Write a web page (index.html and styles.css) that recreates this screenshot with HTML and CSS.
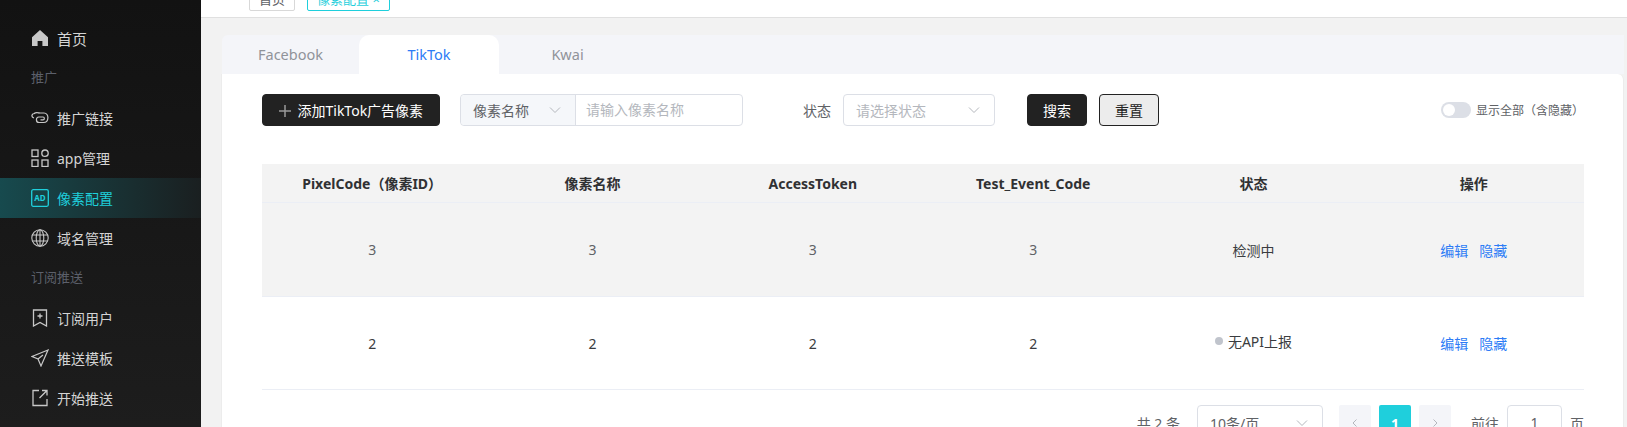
FILE: index.html
```html
<!DOCTYPE html>
<html lang="zh-CN">
<head>
  <meta charset="UTF-8" />
  <title>像素配置</title>
  <link rel="stylesheet" href="styles.css">
</head>
<body>

  <div class="sidebar">
    <div class="menu-item">
      <svg class="menu-icon" viewBox="0 0 18 18"><path d="M9 1 1 8.200V17h5.600v-5h4.800v5H17V8.200z" fill="#c8c8c8"/></svg>
      <span class="home-text">首页</span>
    </div>
    <div class="menu-group">推广</div>
    <div class="menu-item">
      <svg class="menu-icon" viewBox="0 0 18 18" fill="none" stroke="#c8c8c8" stroke-width="1.200"><path d="M4 4.500C.5 4.500-.2 8 3 9M7.500 4h5.500c5.300 0 5.300 9.500-.5 9.500H8c-3.300 0-3.500-5.200-.2-5.500h4.200c1.800 0 1.800 2.800 0 2.800H9.500"/><path d="M3 4.500C5 3 7 3.500 8.500 4"/></svg>
      <span>推广链接</span>
    </div>
    <div class="menu-item">
      <svg class="menu-icon" viewBox="0 0 18 18" fill="none" stroke="#c8c8c8" stroke-width="1.300"><rect x="1" y="1" width="6" height="6.500"/><circle cx="14" cy="4.200" r="3.200"/><rect x="1" y="11" width="6" height="6.500"/><rect x="11" y="11" width="6" height="6.500"/></svg>
      <span>app管理</span>
    </div>
    <div class="menu-item menu-active">
      <svg class="menu-icon" viewBox="0 0 18 18"><rect x=".7" y=".7" width="16.600" height="16.600" rx="1.500" fill="none" stroke="#1fcfdc" stroke-width="1.300"/><text x="9" y="12" class="ad-text">AD</text></svg>
      <span>像素配置</span>
    </div>
    <div class="menu-item">
      <svg class="menu-icon" viewBox="0 0 18 18" fill="none" stroke="#c8c8c8" stroke-width="1.100"><circle cx="9" cy="9" r="8.200"/><ellipse cx="9" cy="9" rx="3.800" ry="8.200"/><path d="M9 .8v16.400M1.500 6h15M1.500 12h15"/></svg>
      <span>域名管理</span>
    </div>
    <div class="menu-group">订阅推送</div>
    <div class="menu-item">
      <svg class="menu-icon" viewBox="0 0 18 18" fill="none" stroke="#c8c8c8" stroke-width="1.300"><path d="M2.500 1h13v16L9 13.500 2.500 17z"/><path d="M9 4.500v5M6.500 7h5"/></svg>
      <span>订阅用户</span>
    </div>
    <div class="menu-item">
      <svg class="menu-icon" viewBox="0 0 18 18" fill="none" stroke="#c8c8c8" stroke-width="1.200"><path d="M17 1 1 7.500l6 2.500 3 7zM7 10l5-4"/></svg>
      <span>推送模板</span>
    </div>
    <div class="menu-item">
      <svg class="menu-icon" viewBox="0 0 18 18" fill="none" stroke="#c8c8c8" stroke-width="1.300"><path d="M8 1.500H2v15h14V10M11 1.500h5v5M16 1.500 8.500 9"/></svg>
      <span>开始推送</span>
    </div>
  </div>

  <div class="main">
    <div class="topbar">
      <div class="tag">首页</div>
      <div class="tag tag-on">像素配置 ×</div>
    </div>

    <div class="content">
      <div class="tabs">
        <div class="tab">Facebook</div>
        <div class="tab tab-on">TikTok</div>
        <div class="tab">Kwai</div>
      </div>

      <div class="card">
        <div class="toolbar">
          <button class="btn btn-add">
            <svg class="plus" viewBox="0 0 12 12"><path d="M6 0v12M0 6h12"/></svg>
            添加TikTok广告像素
          </button>
          <div class="search-group">
            <div class="search-type">像素名称
              <svg class="chevron" viewBox="0 0 12 12"><path d="M1 3.500 6 8.500l5-5"/></svg>
            </div>
            <div class="search-input">请输入像素名称</div>
          </div>
          <div class="status-label">状态</div>
          <div class="status-select">请选择状态
            <svg class="chevron" viewBox="0 0 12 12"><path d="M1 3.500 6 8.500l5-5"/></svg>
          </div>
          <button class="btn btn-search">搜索</button>
          <button class="btn btn-reset">重置</button>
          <div class="show-all">
            <div class="switch"><div class="switch-dot"></div></div>
            显示全部（含隐藏）
          </div>
        </div>

        <div class="table">
          <div class="row row-head">
            <div>PixelCode（像素ID）</div>
            <div>像素名称</div>
            <div>AccessToken</div>
            <div>Test_Event_Code</div>
            <div>状态</div>
            <div>操作</div>
          </div>
          <div class="row row-grey">
            <div>3</div>
            <div>3</div>
            <div>3</div>
            <div>3</div>
            <div class="dark">检测中</div>
            <div class="links"><a>编辑</a><a>隐藏</a></div>
          </div>
          <div class="row">
            <div class="dark">2</div>
            <div class="dark">2</div>
            <div class="dark">2</div>
            <div class="dark">2</div>
            <div class="dark status-cell"><i class="dot"></i>无API上报</div>
            <div class="links"><a>编辑</a><a>隐藏</a></div>
          </div>
        </div>

        <div class="pager">
          <span class="total">共 2 条</span>
          <div class="page-size">10条/页
            <svg class="chevron" viewBox="0 0 12 12"><path d="M1 3.500 6 8.500l5-5"/></svg>
          </div>
          <div class="page-btn">
            <svg class="arrow" viewBox="0 0 10 10"><path d="M6.500 1.500 3 5l3.500 3.500"/></svg>
          </div>
          <div class="page-btn page-on">1</div>
          <div class="page-btn">
            <svg class="arrow" viewBox="0 0 10 10"><path d="M3.500 1.500 7 5 3.500 8.500"/></svg>
          </div>
          <span class="goto">前往</span>
          <div class="page-input">1</div>
          <span>页</span>
        </div>
      </div>
    </div>
  </div>

</body>
</html>
```

FILE: styles.css
```css
html, body {
  height: 427px;
  overflow: hidden;
}
body {
  margin: 0;
  display: flex;
  font-family: "Noto Sans", "Noto Sans CJK SC", sans-serif;
  font-size: 14px;
  color: #606266;
  background: #f2f2f2;
}

/* sidebar */
.sidebar {
  width: 201px;
  flex-shrink: 0;
  padding-top: 18px;
  box-sizing: border-box;
  background: linear-gradient(180deg, #121212, #1d1d1d);
}
.menu-item {
  height: 40px;
  display: flex;
  align-items: center;
  gap: 8px;
  padding-left: 31px;
  color: #d4d4d4;
}
.menu-icon {
  width: 18px;
  height: 18px;
  flex-shrink: 0;
}
.home-text { font-size: 15px; }
.menu-group {
  height: 40px;
  line-height: 38px;
  padding-left: 31px;
  font-size: 13px;
  color: #5c606b;
}
.menu-active {
  color: #1fcfdc;
  background: linear-gradient(90deg, #174a4e, #1a1f20);
}
.ad-text {
  font-size: 8px;
  font-weight: 700;
  text-anchor: middle;
  fill: #1fcfdc;
}

/* top bar */
.main {
  flex: 1;
  min-width: 0;
}
.topbar {
  height: 18px;
  display: flex;
  align-items: flex-end;
  gap: 12px;
  padding: 0 0 6px 48px;
  box-sizing: border-box;
  overflow: hidden;
  background: #fff;
  border-bottom: 1px solid #e0e0e0;
}
.tag {
  height: 26px;
  line-height: 26px;
  padding: 0 9px;
  flex-shrink: 0;
  box-sizing: border-box;
  font-size: 13px;
  border: 1px solid #d8d8d8;
  border-radius: 2px;
}
.tag-on {
  color: #1fcfdc;
  border-color: #1fcfdc;
}

/* tabs */
.content {
  padding: 17px 3px 0 21px;
}
.tabs {
  height: 39px;
  display: flex;
  background: #f4f5f9;
  border-radius: 6px 0 0 0;
}
.tab {
  width: 137px;
  text-align: center;
  line-height: 38px;
  font-size: 14.500px;
  color: #909399;
}
.tab-on {
  width: 140px;
  color: #2d7cf6;
  background: #fff;
  border-radius: 10px 10px 0 0;
}

/* card */
.card {
  height: 400px;
  padding: 20px 39px 0 40px;
  background: #fff;
  border-left: 1px solid #ececec;
  border-right: 1px solid #ececec;
  margin-left: -1px;
  border-radius: 0 6px 0 0;
}
.toolbar {
  height: 32px;
  display: flex;
  align-items: center;
}
.btn {
  height: 32px;
  padding: 0;
  font-family: inherit;
  font-size: 14px;
  border-radius: 4px;
  border: 1px solid #222;
  background: #222;
  color: #fff;
  flex-shrink: 0;
}
.btn-add {
  width: 178px;
  margin-right: 20px;
}
.plus {
  width: 12px;
  height: 12px;
  margin-right: 3px;
  fill: none;
  stroke: #999;
  stroke-width: 1.500;
  vertical-align: -1px;
}
.btn-search {
  width: 60px;
  margin-left: 32px;
}
.btn-reset {
  width: 60px;
  margin-left: 12px;
  color: #222;
  background: #ececec;
}
.search-group {
  width: 283px;
  height: 32px;
  display: flex;
  box-sizing: border-box;
  border: 1px solid #dcdfe6;
  border-radius: 4px;
}
.search-type {
  width: 115px;
  display: flex;
  align-items: center;
  justify-content: space-between;
  padding: 0 14px 0 12px;
  box-sizing: border-box;
  background: #f5f7fa;
  border-right: 1px solid #dcdfe6;
  border-radius: 4px 0 0 4px;
}
.search-input {
  line-height: 30px;
  padding-left: 10px;
  color: #b4b7bd;
}
.status-label {
  margin-left: 60px;
  width: 40px;
}
.status-select {
  width: 152px;
  height: 32px;
  display: flex;
  align-items: center;
  justify-content: space-between;
  padding: 0 14px 0 12px;
  box-sizing: border-box;
  border: 1px solid #dcdfe6;
  border-radius: 4px;
  color: #b4b7bd;
}
.chevron {
  width: 12px;
  height: 12px;
  fill: none;
  stroke: #b4b7bd;
  stroke-width: 1;
}
.show-all {
  margin-left: auto;
  display: flex;
  align-items: center;
  gap: 5px;
  font-size: 12px;
}
.switch {
  width: 30px;
  height: 16px;
  border-radius: 8px;
  background: #dcdfe6;
}
.switch-dot {
  width: 12px;
  height: 12px;
  margin: 2px;
  border-radius: 50%;
  background: #fff;
}

/* table */
.table {
  margin-top: 38px;
}
.row {
  height: 93px;
  display: grid;
  grid-template-columns: repeat(6, 1fr);
  align-items: center;
  text-align: center;
  border-bottom: 1px solid #ebeef5;
  box-sizing: border-box;
}
.row-head {
  height: 39px;
  font-weight: 700;
  color: #303133;
  background: #f3f3f3;
}
.row-grey {
  height: 94px;
  background: #f3f3f3;
}
.dark { color: #3a3c40; }
.status-cell { margin-bottom: 4px; }
.dot {
  display: inline-block;
  width: 8px;
  height: 8px;
  margin-right: 5px;
  border-radius: 50%;
  background: #c0c4cc;
  vertical-align: 2px;
}
.links a {
  color: #2d7cf6;
  margin: 0 5.500px;
}

/* pagination */
.pager {
  margin-top: 15px;
  display: flex;
  align-items: center;
  justify-content: flex-end;
  height: 36px;
}
.total { margin-right: 17px; }
.page-size {
  width: 126px;
  height: 36px;
  display: flex;
  align-items: center;
  justify-content: space-between;
  padding: 0 14px 0 12px;
  box-sizing: border-box;
  border: 1px solid #dcdfe6;
  border-radius: 4px;
  margin-right: 16px;
}
.page-btn {
  width: 32px;
  height: 36px;
  margin-right: 8px;
  display: flex;
  align-items: center;
  justify-content: center;
  background: #f4f5f9;
  border-radius: 2px;
}
.page-on {
  background: #1fcfdc;
  color: #fff;
  font-weight: 700;
}
.arrow {
  width: 10px;
  height: 10px;
  fill: none;
  stroke: #b4b7bd;
  stroke-width: 1;
}
.goto { margin: 0 8px 0 12px; }
.page-input {
  width: 55px;
  height: 36px;
  line-height: 34px;
  text-align: center;
  box-sizing: border-box;
  border: 1px solid #dcdfe6;
  border-radius: 4px;
  margin-right: 8px;
}
```
